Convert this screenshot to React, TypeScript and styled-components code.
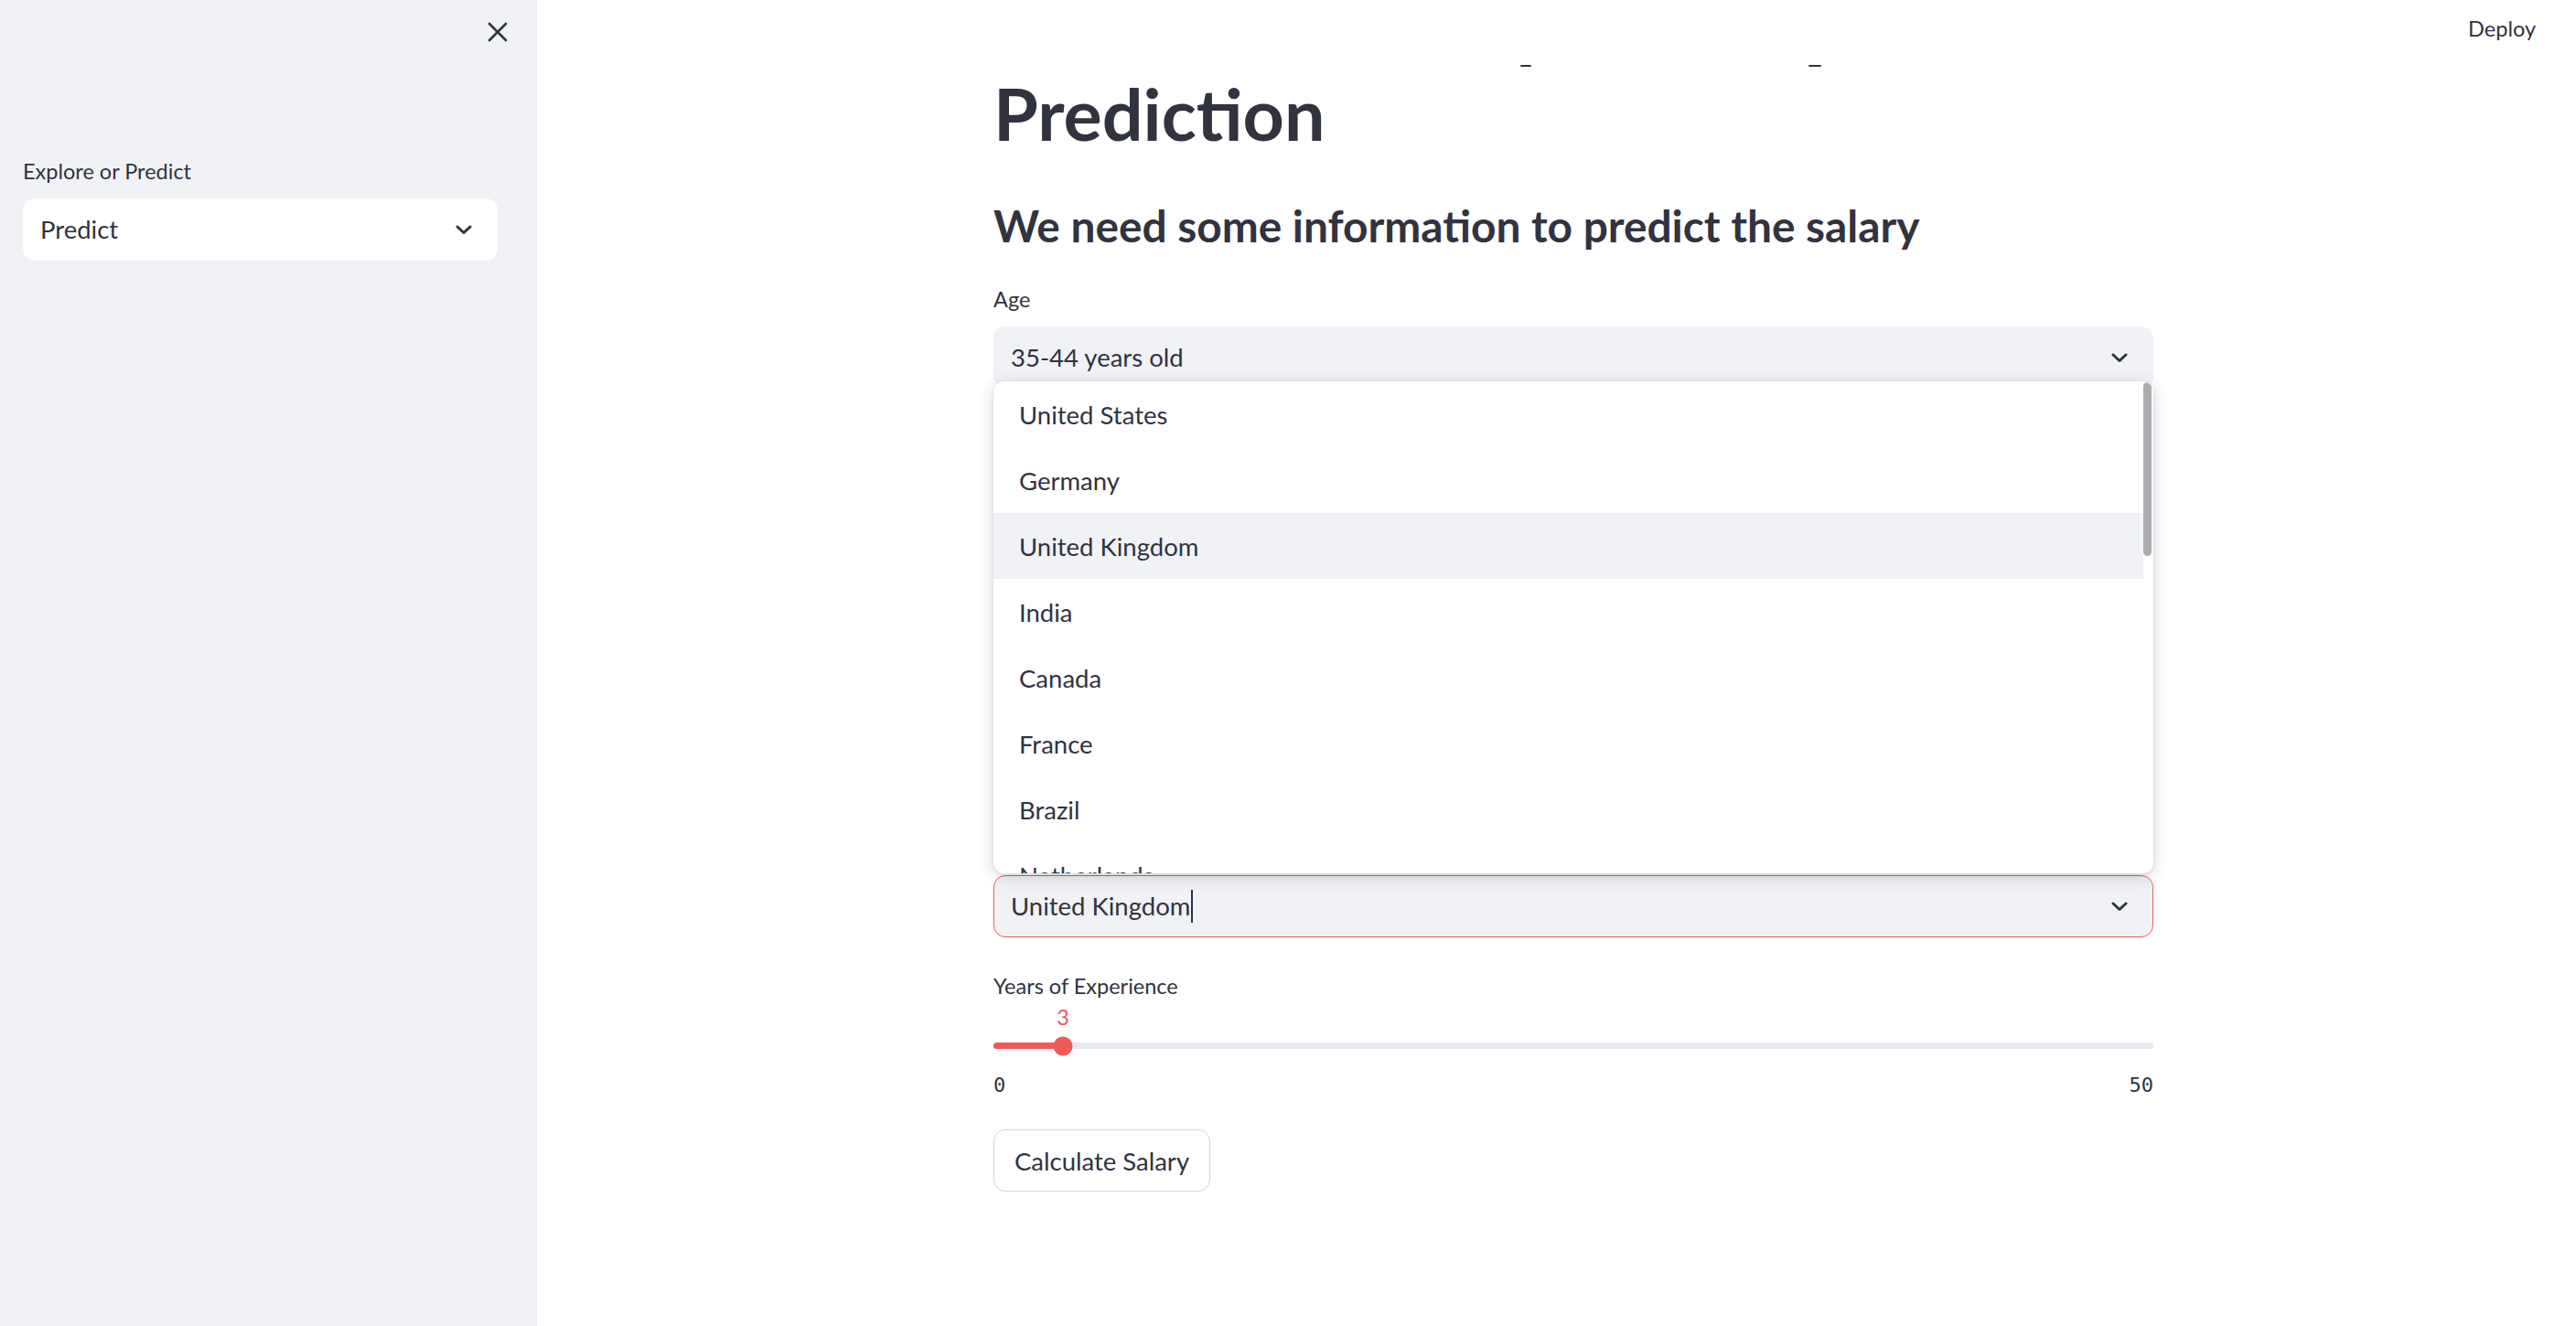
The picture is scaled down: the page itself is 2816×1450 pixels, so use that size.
import * as React from 'react';
import styled, { createGlobalStyle } from 'styled-components';

const COUNTRIES = [
  'United States',
  'Germany',
  'United Kingdom',
  'India',
  'Canada',
  'France',
  'Brazil',
  'Netherlands',
];

const EXPERIENCE = 3;
const EXPERIENCE_MAX = 50;

const GlobalStyle = createGlobalStyle`
  html, body {
    margin: 0;
    padding: 0;
    background: #ffffff;
  }
  body {
    font-family: Lato, 'Open Sans', sans-serif;
    color: #31333f;
    -webkit-font-smoothing: antialiased;
  }
  * {
    box-sizing: border-box;
  }
`;

const Chevron = () => (
  <svg width="18" height="11" viewBox="0 0 18 11" fill="none">
    <path
      d="M2 2 L9 8.5 L16 2"
      stroke="#31333f"
      strokeWidth="3"
      strokeLinecap="round"
      strokeLinejoin="round"
    />
  </svg>
);

const CloseIcon = () => (
  <svg width="22" height="22" viewBox="0 0 22 22" fill="none">
    <path
      d="M2 2 L20 20 M20 2 L2 20"
      stroke="#31333f"
      strokeWidth="2.6"
      strokeLinecap="round"
    />
  </svg>
);

export default function App() {
  const pct = (EXPERIENCE / EXPERIENCE_MAX) * 100;

  return (
    <>
      <GlobalStyle />
      <Page>
        <Sidebar>
          <CloseRow>
            <CloseButton aria-label="Close sidebar">
              <CloseIcon />
            </CloseButton>
          </CloseRow>
          <SidebarField>
            <Label>Explore or Predict</Label>
            <SelectBox $variant="white">
              <SelectValue>Predict</SelectValue>
              <Chevron />
            </SelectBox>
          </SidebarField>
        </Sidebar>

        <Main>
          <Header>
            <DeployButton>Deploy</DeployButton>
          </Header>
          {/* bits of the page title scrolled up under the header */}
          <Crumb style={{ left: 1075, width: 12 }} />
          <Crumb style={{ left: 1390, width: 14 }} />

          <Block>
            <Title>Prediction</Title>
            <Subtitle>We need some information to predict the salary</Subtitle>

            <Form>
              <Widget>
                <Label>Age</Label>
                <SelectBox>
                  <SelectValue>35-44 years old</SelectValue>
                  <Chevron />
                </SelectBox>
              </Widget>

              <Covered />

              <Widget>
                <Label>Country</Label>
                <Anchor>
                  <Menu>
                    <MenuList>
                      {COUNTRIES.map((c) => (
                        <MenuItem key={c} $active={c === 'United Kingdom'}>
                          {c}
                        </MenuItem>
                      ))}
                    </MenuList>
                    <ScrollTrack>
                      <ScrollThumb />
                    </ScrollTrack>
                  </Menu>
                  <SelectBox $focused>
                    <SelectValue>
                      United Kingdom
                      <Caret />
                    </SelectValue>
                    <Chevron />
                  </SelectBox>
                </Anchor>
              </Widget>

              <Widget>
                <Label>Years of Experience</Label>
                <Slider>
                  <SliderValue style={{ left: `${pct}%` }}>{EXPERIENCE}</SliderValue>
                  <Track>
                    <Fill style={{ width: `${pct}%` }} />
                    <Thumb style={{ left: `${pct}%` }} />
                  </Track>
                </Slider>
                <TickRow>
                  <span>0</span>
                  <span>{EXPERIENCE_MAX}</span>
                </TickRow>
              </Widget>

              <div>
                <Button>Calculate Salary</Button>
              </div>
            </Form>
          </Block>
        </Main>
      </Page>
    </>
  );
}

const Page = styled.div`
  display: flex;
  min-height: 100vh;
  width: 100%;
`;

const Sidebar = styled.aside`
  flex: 0 0 587px;
  background: #f0f2f6;
  padding: 0 43px 0 25px;
  display: flex;
  flex-direction: column;
`;

const CloseRow = styled.div`
  height: 70px;
  display: flex;
  align-items: center;
  justify-content: flex-end;
  margin-right: -11px;
`;

const CloseButton = styled.button`
  border: none;
  background: transparent;
  padding: 0;
  width: 22px;
  height: 22px;
  display: flex;
  align-items: center;
  justify-content: center;
`;

const SidebarField = styled.div`
  margin-top: 97px;
  display: flex;
  flex-direction: column;
`;

const Label = styled.div`
  font-size: 23.5px;
  line-height: 40px;
  height: 40px;
  margin-bottom: 10px;
  color: #31333f;
`;

const SelectBox = styled.div<{ $variant?: 'white'; $focused?: boolean }>`
  height: 68px;
  border-radius: 13px;
  background: ${(p) => (p.$variant === 'white' ? '#ffffff' : '#f0f2f6')};
  border: 1.5px solid ${(p) => (p.$focused ? '#ee5b57' : 'transparent')};
  display: flex;
  align-items: center;
  justify-content: space-between;
  padding: 0 27px 0 18px;
  font-size: 27.5px;
  color: #31333f;
`;

const SelectValue = styled.span`
  display: flex;
  align-items: center;
  line-height: 1;
`;

const Caret = styled.span`
  display: inline-block;
  width: 2px;
  height: 36px;
  background: #31333f;
  margin-left: 1px;
`;

const Main = styled.main`
  flex: 1;
  position: relative;
  padding: 77px 0 120px 499px;
`;

const Header = styled.header`
  position: absolute;
  top: 0;
  right: 0;
  height: 62px;
  display: flex;
  align-items: center;
  padding-right: 44px;
`;

const DeployButton = styled.button`
  border: none;
  background: transparent;
  padding: 0;
  font-family: inherit;
  font-size: 23.5px;
  color: #31333f;
`;

const Crumb = styled.span`
  position: absolute;
  top: 71px;
  height: 2px;
  border-radius: 1px;
  background: #31333f;
`;

const Block = styled.div`
  width: 1268px;
`;

const Title = styled.h1`
  margin: 0;
  font-size: 79px;
  line-height: 1.2;
  font-weight: 700;
  color: #31333f;
`;

const Subtitle = styled.h3`
  margin: 46px 0 0;
  font-size: 47.8px;
  line-height: 1.2;
  font-weight: 700;
  color: #31333f;
`;

const Form = styled.div`
  margin-top: 32px;
  display: flex;
  flex-direction: column;
  gap: 33px;
`;

const Widget = styled.div`
  display: flex;
  flex-direction: column;
`;

const Covered = styled.div`
  height: 416px;
`;

const Anchor = styled.div`
  position: relative;
`;

const Menu = styled.div`
  position: absolute;
  left: 0;
  right: 0;
  bottom: calc(100% + 2px);
  height: 538px;
  background: #ffffff;
  border-radius: 12px;
  box-shadow: 0 4px 18px rgba(0, 0, 0, 0.16), 0 1px 4px rgba(0, 0, 0, 0.08);
  display: flex;
  overflow: hidden;
  z-index: 5;
`;

const MenuList = styled.ul`
  list-style: none;
  margin: 0;
  padding: 0;
  flex: 1;
`;

const MenuItem = styled.li<{ $active?: boolean }>`
  height: 72px;
  display: flex;
  align-items: center;
  padding-left: 28px;
  font-size: 27.5px;
  color: #31333f;
  background: ${(p) => (p.$active ? '#f0f2f6' : 'transparent')};
`;

const ScrollTrack = styled.div`
  flex: 0 0 11px;
  padding: 1px 2px 0 0;
`;

const ScrollThumb = styled.div`
  width: 9px;
  height: 190px;
  border-radius: 5px;
  background: #acadb1;
`;

const Slider = styled.div`
  position: relative;
  padding-top: 32px;
`;

const SliderValue = styled.span`
  position: absolute;
  top: -11px;
  transform: translateX(-50%);
  font-size: 23.5px;
  line-height: 30px;
  color: #ee5b57;
`;

const Track = styled.div`
  position: relative;
  height: 7px;
  border-radius: 4px;
  background: #e6e9ef;
`;

const Fill = styled.div`
  height: 100%;
  border-radius: 4px;
  background: #ee5b57;
`;

const Thumb = styled.div`
  position: absolute;
  top: 50%;
  width: 21px;
  height: 21px;
  border-radius: 50%;
  background: #ee5b57;
  transform: translate(-50%, -50%);
`;

const TickRow = styled.div`
  display: flex;
  justify-content: space-between;
  margin-top: 25px;
  font-family: 'DejaVu Sans Mono', 'Liberation Mono', monospace;
  font-size: 22px;
  line-height: 30px;
  color: #31333f;
`;

const Button = styled.button`
  height: 68px;
  padding: 0 22px;
  border-radius: 13px;
  border: 1.5px solid #d6d6d9;
  background: #ffffff;
  font-family: inherit;
  font-size: 27.5px;
  color: #31333f;
`;
